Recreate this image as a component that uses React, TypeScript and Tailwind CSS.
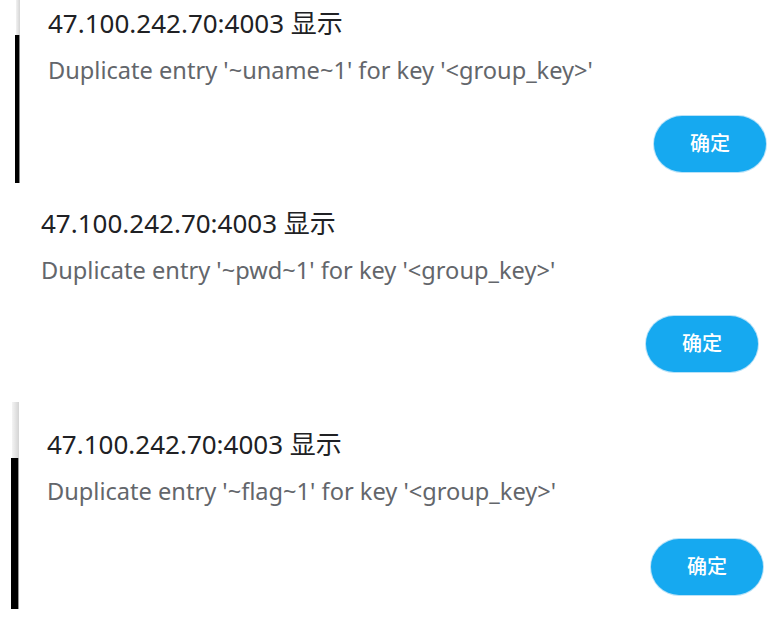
import React from "react";

type DialogProps = {
  message: string;
  bar?: React.ReactNode;
  sectionClass: string;
  contentClass: string;
  buttonGap: string;
};

function Dialog({ message, bar, sectionClass, contentClass, buttonGap }: DialogProps) {
  return (
    <section className={`flex ${sectionClass}`}>
      {bar}
      <div className={`flex flex-1 flex-col ${contentClass}`}>
        <h2 className="text-[26px] leading-[34px] font-normal text-[#202124]">
          47.100.242.70:4003 显示
        </h2>
        <p className="mt-[15px] text-[23.6px] leading-[30px] text-[#63666b]">{message}</p>
        <div className={`flex justify-end ${buttonGap}`}>
          <button className="h-[56px] w-[112px] rounded-full bg-[#16a9f0] text-[20px] font-medium text-white shadow-[0_0_0_1px_#b9e2f8]">
            确定
          </button>
        </div>
      </div>
    </section>
  );
}

export default function App() {
  return (
    <div
      className="h-[632px] w-[778px] overflow-hidden bg-white"
      style={{ fontFamily: '"Noto Sans", "Noto Sans CJK SC", sans-serif' }}
    >
      <Dialog
        message="Duplicate entry '~uname~1' for key '<group_key>'"
        sectionClass="h-[185px]"
        contentClass="pl-[28px] pt-[6px] pr-[12px]"
        buttonGap="mt-[31px]"
        bar={
          <div className="ml-[15px] flex h-[183px] w-[5px] flex-col">
            <div className="ml-[1px] h-[35px] bg-gradient-to-r from-[#f2f2f2] to-[#d4d4d4]" />
            <div className="flex-1 border-r border-[#888] bg-black" />
          </div>
        }
      />
      <Dialog
        message="Duplicate entry '~pwd~1' for key '<group_key>'"
        sectionClass="h-[205px]"
        contentClass="pl-[41px] pt-[21px] pr-[20px]"
        buttonGap="mt-[31px]"
      />
      <Dialog
        message="Duplicate entry '~flag~1' for key '<group_key>'"
        sectionClass="h-[242px]"
        contentClass="pl-[28px] pt-[37px] pr-[15px]"
        buttonGap="mt-[33px]"
        bar={
          <div className="ml-[11px] mt-[12px] flex h-[207px] w-[8px] flex-col">
            <div className="ml-[1px] h-[56px] bg-gradient-to-r from-[#f4f4f4] to-[#d4d4d4]" />
            <div className="flex-1 border-r border-[#999] bg-black" />
          </div>
        }
      />
    </div>
  );
}
